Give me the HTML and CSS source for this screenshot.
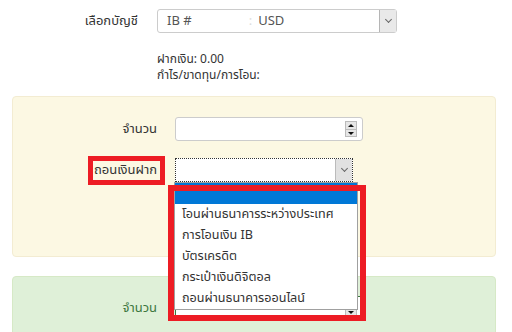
FILE: index.html
```html
<!DOCTYPE html>
<html lang="th">
<head>
  <meta charset="UTF-8">
  <meta name="viewport" content="width=device-width, initial-scale=1.0">
  <title>ถอนเงิน</title>
  <link rel="stylesheet" href="styles.css">
</head>
<body>
  <div class="page">
    <div class="row top-row">
      <label class="lbl lbl-top">เลือกบัญชี</label>
      <div class="select select-account">
        <span class="sel-text">IB #<span class="sep">:</span>USD</span>
        <span class="sel-btn"><span class="chev"></span></span>
      </div>
    </div>
    <div class="info">
      <div>ฝากเงิน: 0.00</div>
      <div>กำไร/ขาดทุน/การโอน:</div>
    </div>

    <div class="panel panel-warn">
      <div class="row">
        <label class="lbl">จำนวน</label>
        <div class="input input-num">
          <span class="spin"><span class="up"></span><span class="down"></span></span>
        </div>
      </div>
      <div class="row row-method">
        <label class="lbl">ถอนเงินฝาก</label>
        <span class="mark mark-label"></span>
        <div class="select select-method">
          <span class="sel-text"></span>
          <span class="sel-btn"><span class="chev"></span></span>
          <ul class="dropdown">
            <li class="active">&nbsp;</li>
            <li>โอนผ่านธนาคารระหว่างประเทศ</li>
            <li>การโอนเงิน IB</li>
            <li>บัตรเครดิต</li>
            <li>กระเป๋าเงินดิจิตอล</li>
            <li>ถอนผ่านธนาคารออนไลน์</li>
          </ul>
          <span class="mark mark-list"></span>
        </div>
      </div>
    </div>

    <div class="panel panel-ok">
      <div class="row">
        <label class="lbl">จำนวน</label>
        <div class="input input-num input-ok">
          <span class="spin"><span class="up"></span><span class="down"></span></span>
        </div>
      </div>
    </div>
  </div>
</body>
</html>
```

FILE: styles.css
```css
* {margin:0; padding:0; box-sizing: border-box;}
ul{list-style-type: none;}
body{
  background: #fff;
  color: #333;
  font-family: Tahoma, "Noto Sans Thai", "Noto Sans", "DejaVu Sans", sans-serif;
  font-size: 13px;
}
.page{
  width: 512px;
  height: 332px;
  overflow: hidden;
  padding-top: 9px;
}
.row{
  display: flex;
  align-items: center;
  gap: 18px;
  position: relative;
}
.lbl{
  width: 144px;
  text-align: right;
}
.top-row{ gap: 19px; }
.lbl-top{ width: 138px; }

/* select boxes */
.select{
  position: relative;
  height: 24px;
  border: 1px solid #ccc;
  border-radius: 3px;
  background: #fff;
  display: flex;
  align-items: center;
  color: #555;
}
.select-account{ width: 240px; }
.sel-text{ flex: 1; padding-left: 9px; }
.sep{ color: #ddd; margin: 0 6px 0 57px; }
.sel-btn{
  width: 17px;
  height: 22px;
  background: #e9e9e9;
  border-left: 1px solid #b5b5b5;
  display: flex;
  justify-content: center;
  align-items: center;
}
.chev{
  width: 5px;
  height: 5px;
  border-right: 1px solid #666;
  border-bottom: 1px solid #666;
  transform: rotate(45deg);
  margin-top: -3px;
}
.select-method{
  width: 178px;
  border: 1px dotted #333;
  border-radius: 0;
}
.select-method .sel-btn{
  height: 22px;
  border-left: 1px solid #bbb;
  background: #e1e1e1;
}

.info{
  padding: 18px 0 0 157px;
  line-height: 16px;
  font-size: 12px;
}

/* panels */
.panel{
  margin: 0 16px 0 12px;
  border: 1px solid;
  border-radius: 4px;
}
.panel-warn{
  margin-top: 13px;
  height: 161px;
  background: #fcf8e3;
  border-color: #f3ecd2;
  padding-top: 20px;
}
.panel-warn .row + .row{ margin-top: 17px; }
.panel-ok{
  margin-top: 19px;
  height: 80px;
  background: #dff0d8;
  border-color: #d6e9c6;
  padding-top: 19px;
}
.panel-ok .lbl{ color: #3c763d; }

.input{
  width: 188px;
  height: 24px;
  border: 1px solid #ccc;
  border-radius: 3px;
  background: #fff;
  display: flex;
  justify-content: flex-end;
  align-items: center;
  padding-right: 5px;
}
.input-ok{ border-color: #3c763d; }
.spin{
  width: 12px;
  height: 16px;
  display: flex;
  flex-direction: column;
  border: 1px solid #bbb;
  background: #e6e6e6;
}
.spin span{
  flex: 1;
  position: relative;
}
.spin .up{ border-bottom: 1px solid #bbb; }
.spin .up::after, .spin .down::after{
  content: "";
  position: absolute;
  left: 2px;
  border-left: 3px solid transparent;
  border-right: 3px solid transparent;
}
.spin .up::after{ top: 2px; border-bottom: 3px solid #111; }
.spin .down::after{ top: 2px; border-top: 3px solid #111; }

/* open option list */
.dropdown{
  position: absolute;
  top: 23px;
  left: -2px;
  width: 184px;
  background: #fff;
  border: 1px solid #a0a0a0;
  color: #333;
  z-index: 2;
}
.dropdown li{
  height: 21px;
  line-height: 21px;
  padding-left: 7px;
  white-space: nowrap;
  font-size: 12.6px;
}
.dropdown li.active{ background: #0078d7; }

/* red annotation frames */
.mark{
  position: absolute;
  border: 5px solid #ed1c24;
  z-index: 3;
}
.mark-label{
  left: 75px;
  top: -2px;
  width: 77px;
  height: 29px;
}
.mark-list{
  left: -8px;
  top: 26px;
  width: 198px;
  height: 136px;
  border-width: 6px;
}
```
